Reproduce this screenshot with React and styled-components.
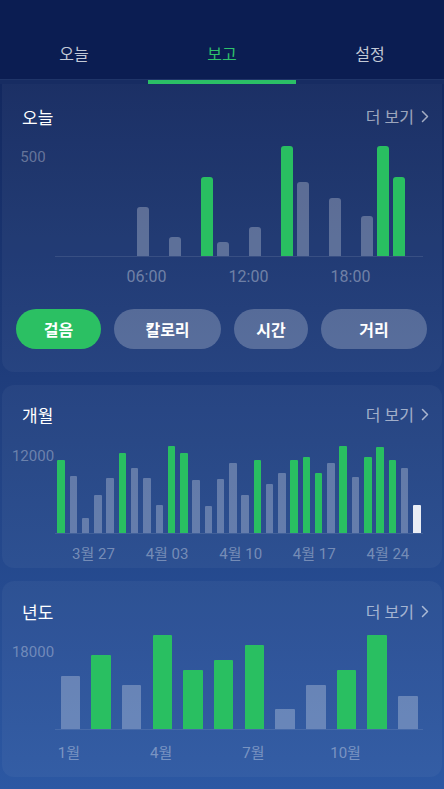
import React from "react";
import styled, { createGlobalStyle } from "styled-components";

const GlobalStyle = createGlobalStyle`
  html, body {
    margin: 0;
    padding: 0;
  }
  body {
    min-height: 100vh;
    background: linear-gradient(180deg, #0f2257 0%, #1f3d7c 48%, #2c58a3 100%);
    font-family: Roboto, "Noto Sans CJK KR", sans-serif;
    color: #fff;
  }
`;

const StyledPage = styled.div`
  display: flex;
  flex-direction: column;
`;

const StyledHeader = styled.header`
  display: flex;
  flex-direction: column;
`;

const StyledTabList = styled.nav`
  display: flex;
  height: 80px;
  padding-top: 26px;
  box-sizing: border-box;
  background: #0b1d52;
  border-bottom: 1px solid #1f3468;
`;

const StyledTab = styled.div`
  flex: 1;
  display: flex;
  align-items: center;
  justify-content: center;
  font-size: 16px;
  color: ${(p) => (p.$active ? "#2fc26b" : "#c3c9d6")};
`;

const StyledTrack = styled.div`
  display: flex;
  height: 4px;
  background: #172c62;
`;

const StyledIndicator = styled.div`
  width: 33.333%;
  margin-left: ${(p) => p.$index * 33.333}%;
  background: #2bbf66;
`;

const StyledCard = styled.section`
  margin: ${(p) => (p.$first ? "0 2px" : "13px 2px 0")};
  padding: ${(p) => p.$pt}px 0 ${(p) => p.$pb}px;
  border-radius: ${(p) => (p.$first ? "0 0 12px 12px" : "12px")};
  background: rgba(255, 255, 255, 0.04);
`;

const StyledTitleRow = styled.div`
  display: flex;
  align-items: center;
  justify-content: space-between;
  height: 24px;
  padding: 0 13px 0 20px;
`;

const StyledTitle = styled.h2`
  margin: 0;
  font-size: 17px;
  font-weight: 400;
  color: #fff;
`;

const StyledMore = styled.div`
  display: flex;
  align-items: center;
  gap: 7px;
  font-size: 16px;
  color: rgba(255, 255, 255, 0.58);
`;

const StyledChart = styled.div`
  margin-top: ${(p) => p.$mt}px;
`;

const StyledPlot = styled.div`
  display: flex;
  padding-left: 9px;
`;

const StyledAxis = styled.div`
  width: 44px;
  display: flex;
  flex-direction: column;
`;

const StyledAxisLabel = styled.span`
  margin-top: ${(p) => p.$top}px;
  line-height: 18px;
  font-size: 15px;
  text-align: center;
  color: rgba(255, 255, 255, 0.32);
`;

const StyledBars = styled.div`
  width: 368px;
  height: ${(p) => p.$h}px;
  display: flex;
  align-items: flex-end;
  border-bottom: 1px solid rgba(255, 255, 255, 0.1);
`;

const StyledSlot = styled.div`
  flex: 1;
  height: 100%;
  display: flex;
  align-items: flex-end;
  justify-content: center;
`;

const toneColor = {
  g: "#29bf61",
  s: "rgba(255, 255, 255, 0.27)",
  w: "#e9edf5",
};

const StyledBar = styled.div`
  width: ${(p) => p.$w}px;
  border-radius: ${(p) => p.$r}px ${(p) => p.$r}px 0 0;
  background: ${(p) => toneColor[p.$tone]};
`;

const StyledXLabels = styled.div`
  display: flex;
  margin-top: ${(p) => p.$mt}px;
  padding-left: ${(p) => p.$offset}px;
`;

const StyledXLabel = styled.span`
  width: ${(p) => p.$pitch}px;
  flex-shrink: 0;
  text-align: center;
  line-height: 20px;
  font-size: ${(p) => p.$size}px;
  color: rgba(255, 255, 255, 0.36);
  white-space: nowrap;
`;

const StyledChips = styled.div`
  display: flex;
  gap: 13px;
  margin-top: 22px;
  padding-left: 14px;
`;

const StyledChip = styled.button`
  width: ${(p) => p.$w}px;
  height: 40px;
  border: none;
  border-radius: 20px;
  padding: 0;
  font-family: inherit;
  font-size: 16px;
  font-weight: 700;
  color: #fff;
  background: ${(p) => (p.$active ? "#2bc063" : "rgba(255, 255, 255, 0.23)")};
`;

const hourBars = [
  null, null, null, null, null,
  ["s", 49], null, ["s", 19], null, ["g", 79], ["s", 14], null,
  ["s", 29], null, ["g", 110], ["s", 74], null, ["s", 58], null,
  ["s", 40], ["g", 110], ["g", 79], null,
];

const dayBars = [
  ["g", 73], ["s", 57], ["s", 15], ["s", 38], ["s", 55], ["g", 80],
  ["s", 65], ["s", 55], ["s", 28], ["g", 87], ["g", 80], ["s", 53],
  ["s", 27], ["s", 54], ["s", 70], ["s", 38], ["g", 73], ["s", 49],
  ["s", 60], ["g", 73], ["g", 76], ["g", 60], ["s", 70], ["g", 87],
  ["s", 56], ["g", 76], ["g", 86], ["g", 73], ["s", 65], ["w", 28],
];

const monthBars = [
  ["s", 53], ["g", 74], ["s", 44], ["g", 94], ["g", 59], ["g", 69],
  ["g", 84], ["s", 20], ["s", 44], ["g", 59], ["g", 94], ["s", 33],
];

const chips = [
  { label: "걸음", w: 85, active: true },
  { label: "칼로리", w: 107 },
  { label: "시간", w: 74 },
  { label: "거리", w: 106 },
];

function Chevron() {
  return (
    <svg width="8" height="13" viewBox="0 0 8 13" fill="none">
      <path d="M1.5 1.5 L6.5 6.5 L1.5 11.5" stroke="rgba(255,255,255,0.6)" strokeWidth="1.5" strokeLinecap="round" strokeLinejoin="round" />
    </svg>
  );
}

function CardTitle({ children }) {
  return (
    <StyledTitleRow>
      <StyledTitle>{children}</StyledTitle>
      <StyledMore>
        더 보기
        <Chevron />
      </StyledMore>
    </StyledTitleRow>
  );
}

function BarChart({ mt, height, axis, axisTop, bars, barWidth, radius, labels, labelOffset, labelPitch, labelTop, labelSize }) {
  return (
    <StyledChart $mt={mt}>
      <StyledPlot>
        <StyledAxis>
          <StyledAxisLabel $top={axisTop}>{axis}</StyledAxisLabel>
        </StyledAxis>
        <StyledBars $h={height}>
          {bars.map((b, i) => (
            <StyledSlot key={i}>
              {b && <StyledBar $tone={b[0]} $w={barWidth} $r={radius} style={{ height: b[1] }} />}
            </StyledSlot>
          ))}
        </StyledBars>
      </StyledPlot>
      <StyledXLabels $mt={labelTop} $offset={labelOffset}>
        {labels.map((l) => (
          <StyledXLabel key={l} $pitch={labelPitch} $size={labelSize}>{l}</StyledXLabel>
        ))}
      </StyledXLabels>
    </StyledChart>
  );
}

export default function App() {
  const tabs = ["오늘", "보고", "설정"];
  const active = 1;
  return (
    <>
      <GlobalStyle />
      <StyledPage>
        <StyledHeader>
          <StyledTabList>
            {tabs.map((t, i) => (
              <StyledTab key={t} $active={i === active}>{t}</StyledTab>
            ))}
          </StyledTabList>
          <StyledTrack>
            <StyledIndicator $index={active} />
          </StyledTrack>
        </StyledHeader>

        <StyledCard $first $pt={20} $pb={23}>
          <CardTitle>오늘</CardTitle>
          <BarChart
            mt={12}
            height={116}
            axis="500"
            axisTop={8}
            bars={hourBars}
            barWidth={12}
            radius={3}
            labels={["06:00", "12:00", "18:00"]}
            labelOffset={93.5}
            labelPitch={102}
            labelTop={10}
            labelSize={16}
          />
          <StyledChips>
            {chips.map((c) => (
              <StyledChip key={c.label} $w={c.w} $active={c.active}>{c.label}</StyledChip>
            ))}
          </StyledChips>
        </StyledCard>

        <StyledCard $pt={17} $pb={4}>
          <CardTitle>개월</CardTitle>
          <BarChart
            mt={14}
            height={93}
            axis="12000"
            axisTop={7}
            bars={dayBars}
            barWidth={7.5}
            radius={1}
            labels={["3월 27", "4월 03", "4월 10", "4월 17", "4월 24"]}
            labelOffset={54.7}
            labelPitch={73.6}
            labelTop={10}
            labelSize={15}
          />
        </StyledCard>

        <StyledCard $pt={18} $pb={14}>
          <CardTitle>년도</CardTitle>
          <BarChart
            mt={7}
            height={99}
            axis="18000"
            axisTop={13}
            bars={monthBars}
            barWidth={19.6}
            radius={1}
            labels={["1월", "4월", "7월", "10월"]}
            labelOffset={20.9}
            labelPitch={92.2}
            labelTop={13}
            labelSize={15}
          />
        </StyledCard>
      </StyledPage>
    </>
  );
}
